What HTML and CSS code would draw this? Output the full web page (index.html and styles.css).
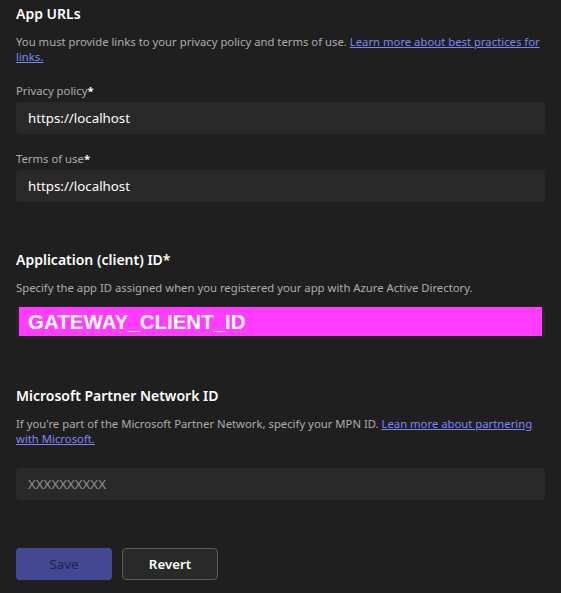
FILE: index.html
```html
<!DOCTYPE html>
<html lang="en">
<head>
<meta charset="utf-8">
<title>App URLs</title>
<link rel="stylesheet" href="styles.css">
</head>
<body>
<main class="page">
  <section class="section urls">
    <h2 class="title">App URLs</h2>
    <p class="desc">You must provide links to your privacy policy and terms of use. <a href="#" class="link">Learn more about best practices for links.</a></p>
    <div class="field">
      <label class="label">Privacy policy<span class="req">*</span></label>
      <div class="input">https://localhost</div>
    </div>
    <div class="field">
      <label class="label">Terms of use<span class="req">*</span></label>
      <div class="input">https://localhost</div>
    </div>
  </section>

  <section class="section client">
    <h2 class="title">Application (client) ID*</h2>
    <p class="desc">Specify the app ID assigned when you registered your app with Azure Active Directory.</p>
    <div class="input masked"><div class="mask">GATEWAY_CLIENT_ID</div></div>
  </section>

  <section class="section mpn">
    <h2 class="title">Microsoft Partner Network ID</h2>
    <p class="desc">If you're part of the Microsoft Partner Network, specify your MPN ID. <a href="#" class="link">Lean more about partnering with Microsoft.</a></p>
    <div class="input placeholder">XXXXXXXXXX</div>
  </section>

  <div class="actions">
    <button class="btn primary">Save</button>
    <button class="btn secondary">Revert</button>
  </div>
</main>
</body>
</html>
```
FILE: styles.css
```css
html, body {
  margin: 0;
  padding: 0;
  background: #1f1f1f;
}
body {
  font-family: "Noto Sans", "Open Sans", sans-serif;
  color: #ffffff;
}
.page {
  padding: 4px 16px 0 16px;
  width: 529px;
}
.title {
  margin: 0;
  font-size: 14px;
  font-weight: 600;
  line-height: 20px;
  color: #ffffff;
}
.desc {
  margin: 10px 0 0 0;
  font-size: 11.3px;
  line-height: 15px;
  color: #adadad;
}
.link {
  color: #7f85f5;
  text-decoration: underline;
}
.field {
  margin-top: 19px;
}
.urls .field + .field {
  margin-top: 17px;
}
.label {
  display: block;
  font-size: 11.3px;
  line-height: 16px;
  color: #adadad;
}
.req {
  color: #ffffff;
  font-weight: 700;
}
.input {
  margin-top: 3px;
  height: 32px;
  background: #292929;
  border-radius: 4px;
  box-sizing: border-box;
  padding: 0 12px;
  display: flex;
  align-items: center;
  font-size: 13.3px;
  color: #ffffff;
}
.client {
  margin-top: 48px;
}
.masked {
  margin-top: 11px;
  padding: 1px 3px 2px 3px;
  align-items: stretch;
  background: #262626;
}
.mask {
  flex: 1;
  background: #ff3cff;
  display: flex;
  align-items: center;
  padding-left: 9px;
  font-family: "Liberation Sans", Arial, sans-serif;
  font-weight: 700;
  font-size: 20.5px;
  color: #ffffff;
}
.mpn {
  margin-top: 48px;
}
.placeholder {
  margin-top: 22px;
  color: #8f8f8f;
}
.actions {
  margin-top: 48px;
  display: flex;
  gap: 10px;
}
.btn {
  height: 32px;
  width: 96px;
  border-radius: 4px;
  font-family: "Noto Sans", "Open Sans", sans-serif;
  font-size: 13.3px;
  font-weight: 600;
  box-sizing: border-box;
}
.primary {
  background: #444791;
  color: #22234a;
  font-weight: 400;
  border: none;
}
.secondary {
  background: #292929;
  color: #ffffff;
  border: 1px solid #5c5c5c;
}
```
